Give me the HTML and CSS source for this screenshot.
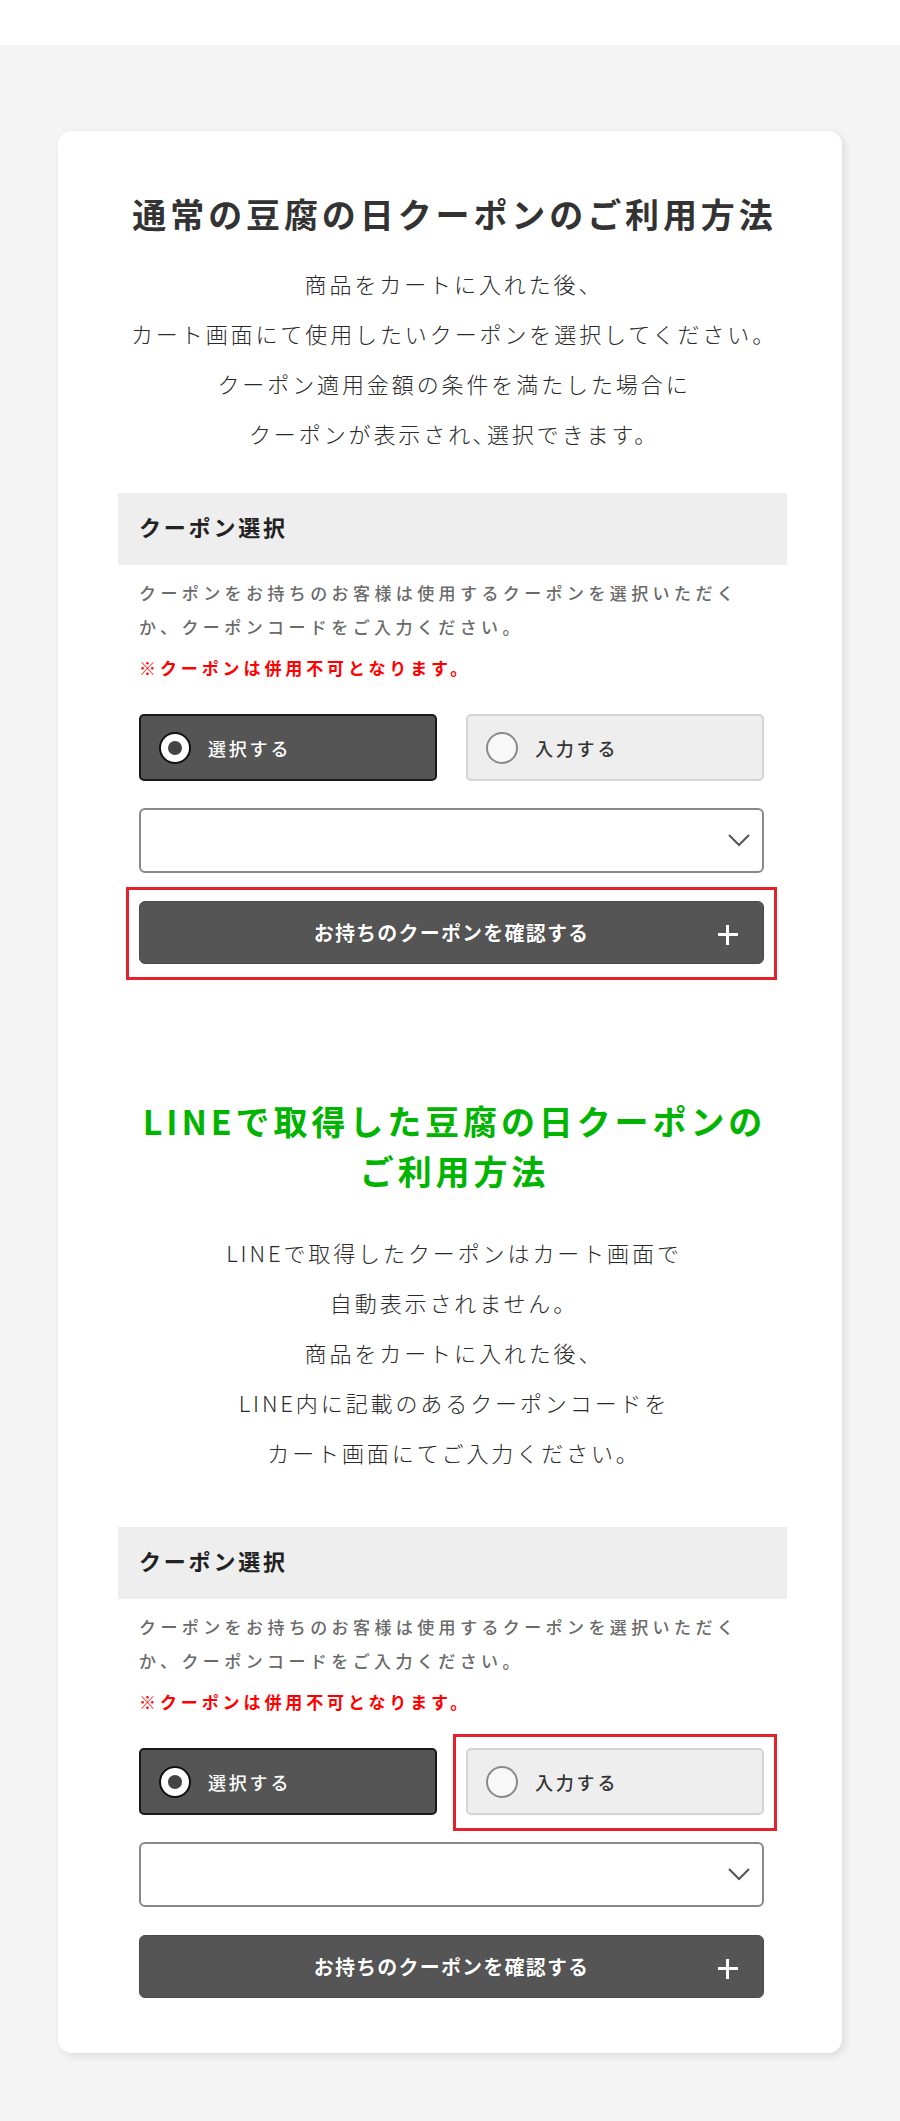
FILE: index.html
```html
<!DOCTYPE html>
<html lang="ja">
<head>
    <meta charset="UTF-8">
    <meta name="viewport" content="width=device-width, initial-scale=1.0">
    <title>豆腐の日クーポンのご利用方法</title>
    <link rel="stylesheet" href="styles.css">
</head>
<body>
    <header class="topbar"></header>

    <main>
        <div class="card">
            <h2 class="title">通常の豆腐の日クーポンのご利用方法</h2>
            <p class="lead">商品をカートに入れた後、<br>カート画面にて使用したいクーポンを選択してください。<br>クーポン適用金額の条件を満たした場合に<br>クーポンが表示され､選択できます。</p>

            <div class="coupon">
                <div class="coupon-head">クーポン選択</div>
                <div class="coupon-body">
                    <p class="coupon-note">クーポンをお持ちのお客様は使用するクーポンを選択いただく<br>か、クーポンコードをご入力ください。</p>
                    <p class="coupon-warn">※クーポンは併用不可となります。</p>
                    <div class="coupon-modes">
                        <div class="mode mode-on"><span class="radio"></span>選択する</div>
                        <div class="mode"><span class="radio"></span>入力する</div>
                    </div>
                    <div class="coupon-select">
                        <svg width="22" height="13" viewBox="0 0 22 13"><polyline points="1,1 11,11 21,1" fill="none" stroke="#555" stroke-width="2"/></svg>
                    </div>
                    <div class="highlight">
                        <div class="coupon-btn">お持ちのクーポンを確認する<span class="plus"></span></div>
                    </div>
                </div>
            </div>

            <h2 class="title title-line">LINEで取得した豆腐の日クーポンの<br>ご利用方法</h2>
            <p class="lead lead-line">LINEで取得したクーポンはカート画面で<br>自動表示されません。<br>商品をカートに入れた後、<br>LINE内に記載のあるクーポンコードを<br>カート画面にてご入力ください。</p>

            <div class="coupon coupon-line">
                <div class="coupon-head">クーポン選択</div>
                <div class="coupon-body">
                    <p class="coupon-note">クーポンをお持ちのお客様は使用するクーポンを選択いただく<br>か、クーポンコードをご入力ください。</p>
                    <p class="coupon-warn">※クーポンは併用不可となります。</p>
                    <div class="coupon-modes">
                        <div class="mode mode-on"><span class="radio"></span>選択する</div>
                        <div class="highlight">
                            <div class="mode"><span class="radio"></span>入力する</div>
                        </div>
                    </div>
                    <div class="coupon-select">
                        <svg width="22" height="13" viewBox="0 0 22 13"><polyline points="1,1 11,11 21,1" fill="none" stroke="#555" stroke-width="2"/></svg>
                    </div>
                    <div class="coupon-btn">お持ちのクーポンを確認する<span class="plus"></span></div>
                </div>
            </div>
        </div>
    </main>
</body>
</html>
```

FILE: styles.css
```css
body {
    margin: 0;
    padding: 0;
    background-color: #f4f4f4;
    font-family: "Noto Sans CJK JP", "Noto Sans", sans-serif;
    color: #333;
}
.topbar {
    height: 45px;
    background: #fff;
}
main {
    padding: 86px 0 68px;
}
.card {
    width: 784px;
    margin: 0 auto;
    padding: 58px 55px 55px 60px;
    box-sizing: border-box;
    background: #fff;
    border-radius: 14px;
    box-shadow: 3px 3px 8px rgba(0,0,0,0.1);
}
.title {
    margin: 0;
    padding-left: 4px;
    font-size: 34px;
    line-height: 50px;
    font-weight: 700;
    letter-spacing: 3.9px;
    text-align: center;
    color: #333;
}
.title-line {
    margin-top: 132px;
    color: #00b400;
}
.lead {
    margin: 19px 0 0;
    padding-left: 3px;
    font-size: 22px;
    line-height: 50px;
    font-weight: 300;
    letter-spacing: 2.9px;
    text-align: center;
    color: #2a2a2a;
}
.lead-line {
    margin-top: 31px;
}
.coupon {
    margin-top: 35px;
}
.coupon-line {
    margin-top: 50px;
}
.coupon-head {
    height: 72px;
    box-sizing: border-box;
    padding: 0 0 6px 21px;
    background: #eee;
    font-size: 22px;
    line-height: 66px;
    font-weight: 700;
    letter-spacing: 2.8px;
    color: #222;
}
.coupon-body {
    padding: 11px 23px 0 21px;
}
.coupon-note {
    margin: 0;
    font-size: 17px;
    line-height: 34px;
    font-weight: 500;
    letter-spacing: 4.4px;
    color: #6a6a6a;
}
.coupon-warn {
    margin: 7px 0 0;
    font-size: 17px;
    line-height: 34px;
    font-weight: 700;
    letter-spacing: 3.9px;
    color: #ff0000;
}
.coupon-modes {
    display: grid;
    grid-template-columns: 1fr 1fr;
    gap: 29px;
    margin-top: 29px;
}
.mode {
    display: flex;
    align-items: center;
    height: 67px;
    box-sizing: border-box;
    padding-left: 18px;
    background: #eee;
    border: 2px solid #d4d4d4;
    border-radius: 5px;
    font-size: 18px;
    font-weight: 500;
    letter-spacing: 2.8px;
    color: #333;
}
.mode-on {
    background: #555;
    border-color: #1a1a1a;
    color: #fff;
}
.radio {
    display: flex;
    align-items: center;
    justify-content: center;
    width: 32px;
    height: 32px;
    box-sizing: border-box;
    margin-right: 17px;
    border: 2px solid #8a8a8a;
    border-radius: 50%;
    background: #f8f8f8;
}
.mode-on .radio {
    background: #fff;
    border-color: #111;
}
.mode-on .radio::after {
    content: "";
    width: 14px;
    height: 14px;
    border-radius: 50%;
    background: #444;
}
.coupon-select {
    display: flex;
    align-items: center;
    justify-content: flex-end;
    height: 65px;
    box-sizing: border-box;
    margin-top: 27px;
    padding-right: 12px;
    border: 2px solid #888;
    border-radius: 6px;
    background: #fff;
}
.highlight {
    position: relative;
}
.highlight::after {
    content: "";
    position: absolute;
    top: -14px;
    right: -13px;
    bottom: -16px;
    left: -13px;
    border: 3px solid #e4222c;
    pointer-events: none;
}
.coupon-btn {
    position: relative;
    height: 63px;
    box-sizing: border-box;
    margin-top: 28px;
    background: #555;
    border: 1px solid #4a4a4a;
    border-radius: 6px;
    font-size: 20px;
    line-height: 61px;
    font-weight: 700;
    letter-spacing: 1.2px;
    text-align: center;
    color: #fff;
    text-shadow: 0 0 1px rgba(0,0,0,0.6);
}
.highlight .coupon-btn {
    margin-top: 0;
}
.coupon-select + .highlight {
    margin-top: 28px;
}
.plus {
    position: absolute;
    right: 25px;
    top: 50%;
    width: 20px;
    height: 20px;
    margin-top: -8px;
}
.plus::before,
.plus::after {
    content: "";
    position: absolute;
    background: #fff;
}
.plus::before {
    left: 0;
    right: 0;
    top: 8px;
    height: 3px;
}
.plus::after {
    top: 0;
    bottom: 0;
    left: 8px;
    width: 3px;
}
```
